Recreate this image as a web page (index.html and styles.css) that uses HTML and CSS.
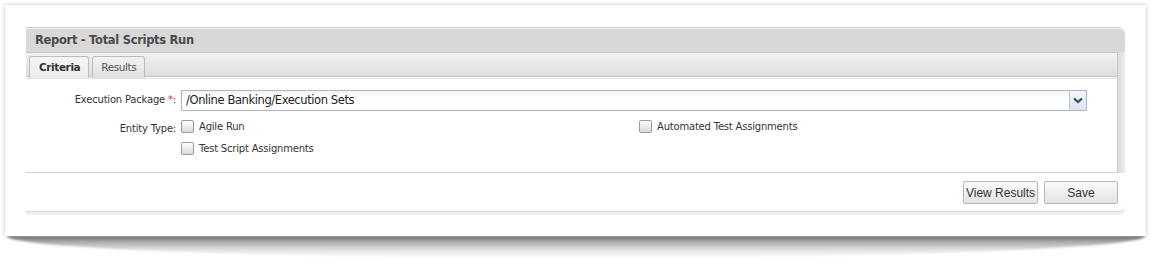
FILE: index.html
```html
<!DOCTYPE html>
<html>

<head>
    <meta charset="UTF-8">
    <link rel="stylesheet" href="styles.css">
    <title>Report - Total Scripts Run</title>
</head>

<body>
    <div class="frame">
        <div class="report-panel">
            <div class="panel-title">Report - Total Scripts Run</div>
            <div class="panel-body">
                <div class="panel-main">
                    <div class="tab-bar">
                        <div class="tab active">Criteria</div>
                        <div class="tab">Results</div>
                    </div>
                    <div class="criteria">
                        <div class="form-row">
                            <label class="field-label">Execution Package <span class="req">*</span>:</label>
                            <div class="select-box">
                                <span class="select-text">/Online Banking/Execution Sets</span>
                                <span class="select-btn">
                                    <svg width="10" height="7" viewBox="0 0 10 7">
                                        <path d="M1 1.5 L5 5 L9 1.5" fill="none" stroke="#2b4a80" stroke-width="2.2" />
                                    </svg>
                                </span>
                            </div>
                        </div>
                        <div class="form-row">
                            <label class="field-label">Entity Type:</label>
                            <div class="check-grid">
                                <div class="check-item"><span class="check"></span>Agile Run</div>
                                <div class="check-item"><span class="check"></span>Automated Test Assignments</div>
                                <div class="check-item"><span class="check"></span>Test Script Assignments</div>
                            </div>
                        </div>
                    </div>
                </div>
                <div class="panel-side"></div>
            </div>
            <div class="panel-footer">
                <button class="btn btn-view">View Results</button>
                <button class="btn btn-save">Save</button>
            </div>
        </div>
    </div>
    <div class="curl-shadow"></div>
</body>

</html>
```

FILE: styles.css
```css
body {
    margin: 0;
    background: #fff;
    font-family: "Liberation Sans", Arial, sans-serif;
}

.frame {
    position: relative;
    z-index: 1;
    margin: 5px 0 0 5px;
    width: 1141px;
    height: 231px;
    box-sizing: border-box;
    padding: 22px 0 0 21px;
    background: #fff;
    box-shadow: 0 0 4px rgba(0, 0, 0, 0.25);
}

/* curled shadow under the frame */
.curl-shadow {
    margin: 0 0 0 7px;
    width: 1138px;
    height: 22px;
    background: linear-gradient(#6e6e6e, #a8a8a8 25%, #dedede 60%, rgba(255, 255, 255, 0));
    border-radius: 0 0 50% 50% / 0 0 100% 100%;
    filter: blur(1px);
}

.report-panel {
    width: 1099px;
    border-top: 1px solid #cfcfcf;
    border-radius: 0 6px 6px 0;
    background: #fff;
    box-shadow: 0 3px 0 #f0f0f0;
}

.panel-title {
    height: 23px;
    border-top: 1px solid #f4f4f4;
    border-radius: 0 6px 0 0;
    background: #d8d8d8;
    padding-left: 9px;
    font-family: "DejaVu Sans", Verdana, sans-serif;
    font-size: 11.5px;
    font-weight: bold;
    letter-spacing: -0.3px;
    color: #4a4a4a;
    line-height: 23px;
}

.panel-body {
    display: flex;
}

.panel-main {
    width: 1092px;
    border-right: 1px solid #c8c8c8;
    border-bottom: 1px solid #cfcfcf;
    box-sizing: border-box;
}

.panel-side {
    flex: 1;
    background: linear-gradient(to right, #dcdcdc, #ececec);
}

.tab-bar {
    display: flex;
    gap: 3px;
    height: 25px;
    box-sizing: border-box;
    padding: 3px 0 0 3px;
    border-top: 1px solid #c6c6c6;
    border-bottom: 1px solid #c4c4c4;
    background: linear-gradient(#f1f1f1, #dedede);
}

.tab {
    height: 21px;
    padding: 0 8px;
    border: 1px solid #bcbcbc;
    border-bottom: none;
    border-radius: 3px 3px 0 0;
    background: linear-gradient(#f2f2f2, #e0e0e0);
    font-family: "DejaVu Sans", Verdana, sans-serif;
    font-size: 10.5px;
    letter-spacing: -0.4px;
    color: #555;
    line-height: 21px;
}

.tab.active {
    padding: 0 8px 0 9px;
    background: linear-gradient(#f6f6f6, #ebebeb);
    font-weight: bold;
    color: #333;
}

.criteria {
    border-top: 1px solid #e2e2e2;
    margin-top: 1px;
    padding: 11px 0 17px;
}

.form-row {
    display: flex;
    align-items: flex-start;
    margin-bottom: 9px;
}

.form-row:last-child {
    margin-bottom: 0;
}

.field-label {
    width: 155px;
    padding-right: 5px;
    box-sizing: border-box;
    text-align: right;
    font-family: "DejaVu Sans", Verdana, sans-serif;
    font-size: 10px;
    letter-spacing: -0.2px;
    color: #333;
    line-height: 20px;
}

.form-row + .form-row .field-label {
    line-height: 16px;
    padding-top: 1px;
}

.req {
    color: #e03030;
}

.select-box {
    display: flex;
    width: 906px;
    height: 21px;
    box-sizing: border-box;
    border: 1px solid #aeb5c6;
    background: linear-gradient(#f4f4f4, #fff 40%);
}

.select-text {
    flex: 1;
    padding-left: 4px;
    font-family: "DejaVu Sans", Verdana, sans-serif;
    font-size: 11.5px;
    letter-spacing: -0.4px;
    color: #222;
    line-height: 19px;
}

.select-btn {
    width: 16px;
    display: flex;
    align-items: center;
    justify-content: center;
    border-left: 1px solid #b8bfcf;
    background: linear-gradient(#f4f6fa, #dfe3ea);
}

.check-grid {
    display: grid;
    grid-template-columns: 458px 448px;
    row-gap: 9px;
}

.check-item {
    display: flex;
    align-items: center;
    height: 13px;
    font-family: "DejaVu Sans", Verdana, sans-serif;
    font-size: 10px;
    letter-spacing: -0.2px;
    color: #333;
}

.check {
    width: 11px;
    height: 11px;
    margin-right: 5px;
    border: 1px solid #9a9a9a;
    border-radius: 2px;
    background: linear-gradient(#fdfdfd, #d9d9d9);
}

.panel-footer {
    display: flex;
    justify-content: flex-end;
    gap: 6px;
    height: 39px;
    box-sizing: border-box;
    padding: 8px 7px 0 0;
    border-bottom: 1px solid #d6d6d6;
    border-radius: 0 0 6px 0;
}

.btn {
    height: 23px;
    border: 1px solid #b8b8b8;
    border-radius: 2px;
    background: linear-gradient(#fafafa, #e3e3e3);
    font-family: "Liberation Sans", Arial, sans-serif;
    font-size: 12px;
    color: #333;
    padding: 0;
}

.btn-view {
    width: 75px;
}

.btn-save {
    width: 74px;
}
```
